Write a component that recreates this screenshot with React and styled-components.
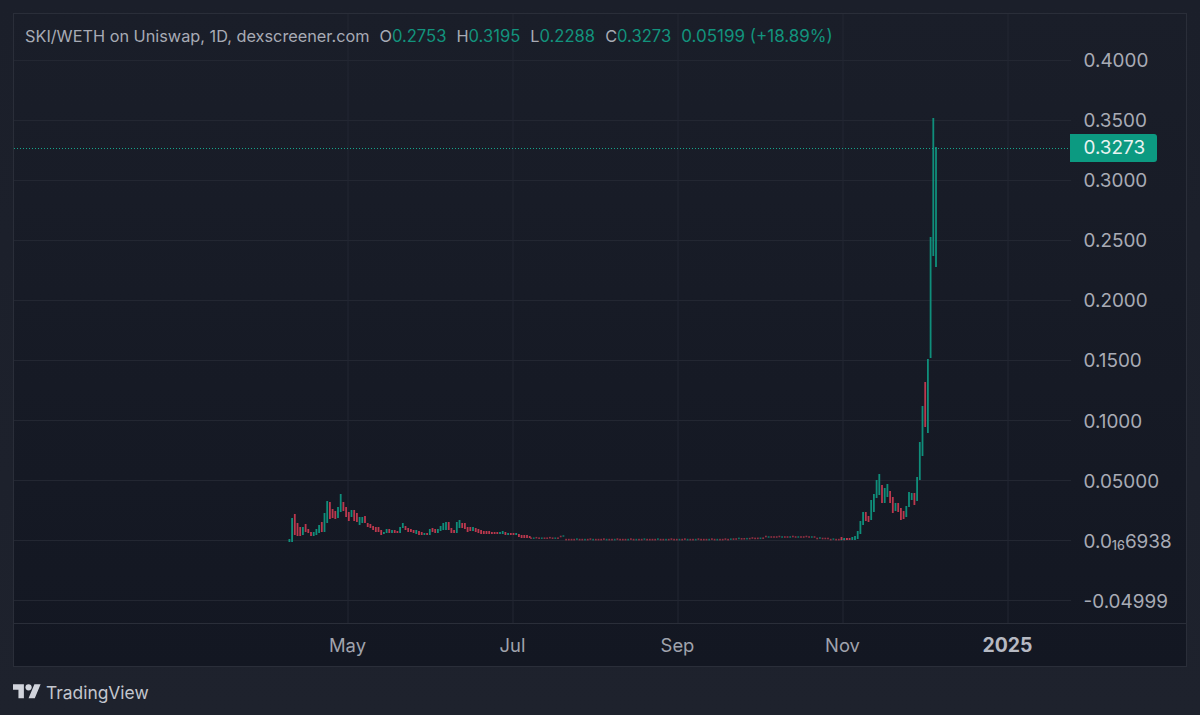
import React from "react";
import styled, { createGlobalStyle } from "styled-components";

const GlobalStyle = createGlobalStyle`
  html, body {
    margin: 0;
    padding: 0;
    background: #1d212c;
    font-family: Inter, "Liberation Sans", sans-serif;
  }
`;

const Page = styled.div`
  width: 1200px;
  height: 715px;
  box-sizing: border-box;
  padding: 13px 13px 0;
  background: linear-gradient(#1b1f2a, #1e222d);
  overflow: hidden;
`;

const Panel = styled.div`
  display: grid;
  grid-template-columns: 1057px 1fr;
  grid-template-rows: 609px 43px;
  width: 1174px;
  height: 654px;
  box-sizing: border-box;
  border: 1px solid #2a2e39;
  background: linear-gradient(#1a1e29, #131722);
`;

const Pane = styled.div`
  position: relative;
  overflow: hidden;
`;

const Chart = styled.svg`
  display: block;
  width: 1057px;
  height: 609px;
`;

const Legend = styled.div`
  position: absolute;
  top: 13px;
  left: 11px;
  display: flex;
  gap: 10px;
  font-size: 16.3px;
  line-height: 19px;
  color: #a8abb5;
  white-space: nowrap;
`;

const Value = styled.span`
  color: #12937d;
  font-size: 16.6px;
`;

const Change = styled(Value)`
  font-size: 17px;
`;

const PriceAxis = styled.div`
  position: relative;
  display: flex;
  flex-direction: column;
  padding: 17px 0 0 12.5px;
`;

const PriceLabel = styled.div`
  height: 60.1px;
  line-height: 60.1px;
  font-size: 18.9px;
  color: #a8abb5;
  white-space: nowrap;
`;

const Sub = styled.span`
  font-size: 12.5px;
  vertical-align: -2px;
  font-weight: 500;
`;

const PriceTag = styled.div`
  position: absolute;
  top: 120px;
  left: -1px;
  width: 87px;
  height: 28px;
  box-sizing: border-box;
  padding-left: 13.5px;
  border-radius: 0 3px 3px 0;
  background: #0c9a81;
  color: #e8f3f1;
  font-size: 18.9px;
  line-height: 28px;
`;

const TimeAxis = styled.div`
  grid-column: 1 / 3;
  display: flex;
  padding-left: 251px;
  border-top: 1px solid #2a2e39;
`;

const TimeLabel = styled.div`
  width: 165px;
  text-align: center;
  font-size: ${(p) => (p.$year ? "19.4px" : "18.4px")};
  line-height: 42px;
  color: ${(p) => (p.$year ? "#b6b9c2" : "#a0a3ad")};
  font-weight: ${(p) => (p.$year ? 700 : 400)};
`;

const Footer = styled.div`
  display: flex;
  align-items: center;
  gap: 5px;
  height: 50px;
  color: #c3c6ce;
  font-size: 17.4px;
`;

const Logo = styled.svg`
  width: 28px;
  height: 22px;
  fill: #d1d4dc;
`;

const GREEN = "#0f957f";
const RED = "#c43a50";

// pixel tops and bottoms per candle, read off the chart
const early = [
  [539, 542, "g"], [518, 542, "g"], [514, 535, "r"], [523, 536, "r"], [527, 536, "r"],
  [527, 535, "g"], [524, 532, "r"], [529, 533, "r"], [532, 536, "r"], [532, 536, "g"],
  [529, 535, "g"], [525, 533, "g"], [522, 532, "r"], [513, 532, "g"], [501, 523, "g"],
  [502, 519, "r"], [509, 518, "r"], [511, 519, "r"], [507, 518, "g"], [494, 512, "g"],
  [502, 511, "r"], [507, 517, "r"], [512, 521, "r"], [510, 517, "g"], [510, 521, "r"],
  [513, 522, "r"], [517, 525, "g"], [517, 523, "g"], [516, 523, "r"], [523, 527, "r"],
  [524, 528, "r"], [526, 530, "r"], [527, 532, "r"], [527, 532, "r"], [530, 535, "r"],
  [532, 534, "g"], [529, 533, "g"], [529, 533, "r"], [530, 533, "g"], [530, 533, "r"],
  [531, 533, "r"], [527, 533, "g"], [523, 528, "g"], [526, 530, "r"], [528, 532, "r"],
  [529, 532, "r"], [530, 533, "r"], [530, 534, "g"], [531, 535, "r"], [532, 535, "r"],
  [533, 535, "g"], [533, 535, "r"], [529, 535, "g"], [528, 532, "r"], [529, 533, "r"],
  [529, 533, "g"], [526, 531, "g"], [523, 530, "g"], [522, 530, "g"], [522, 530, "r"],
  [528, 533, "r"], [530, 533, "r"], [522, 533, "g"], [520, 528, "g"], [523, 528, "r"],
  [523, 529, "r"], [527, 532, "r"], [527, 531, "r"], [527, 531, "g"], [528, 532, "r"],
  [529, 533, "r"], [530, 534, "r"], [531, 534, "r"], [531, 534, "r"], [531, 534, "r"],
  [532, 534, "r"], [532, 534, "r"], [532, 534, "r"], [532, 534, "g"], [531, 534, "g"],
  [532, 535, "r"], [533, 535, "g"], [533, 535, "r"], [533, 535, "r"], [533, 535, "g"],
  [534, 537, "r"], [535, 538, "r"], [535, 538, "r"], [535, 538, "r"], [536, 538, "r"],
];

const flatCentre = (x) => {
  if (x < 560) return 538.2;
  if (x < 566) return 536.5;
  if (x < 730) return 539.6;
  if (x < 765) return 539.2 - (x - 730) * 0.03;
  if (x < 815) return 537;
  if (x < 830) return 538.5;
  return 539.6;
};

const flat = Array.from({ length: 118 }, (_, i) => {
  const x = 531 + i * 2.7;
  const c = flatCentre(x) + (i % 5 === 2 ? -0.5 : 0);
  const colour = [1, 4, 9, 12, 17].includes(i % 19) ? "g" : "r";
  return [c - 0.8, c + 0.8, colour, 0.7];
});

const late = [
  [537, 540, "r"], [538, 540, "g"], [538, 540, "r"], [538, 540, "r"], [537, 540, "g"],
  [536, 540, "g"], [531, 539, "g"], [521, 534, "g"], [512, 525, "g"], [512, 521, "r"],
  [516, 522, "r"], [500, 520, "g"], [494, 512, "g"], [480, 498, "g"], [474, 495, "g"],
  [485, 503, "r"], [488, 503, "g"], [484, 497, "g"], [491, 503, "r"], [497, 513, "r"],
  [503, 511, "g"], [503, 512, "r"], [508, 520, "r"], [511, 519, "r"], [506, 517, "g"],
  [492, 507, "g"], [493, 500, "g"], [493, 505, "r"], [477, 501, "g"], [442, 480, "g"],
  [406, 456, "g"], [382, 427, "r"], [359, 433, "g"], [237, 358, "g"], [118, 256, "g"],
  [147, 267, "g"],
];

const candles = [
  ...early.map((c, i) => [289.4 + i * 2.7, ...c]),
  ...flat.map((c, i) => [531 + i * 2.7, ...c]),
  ...late.map((c, i) => [841.5 + i * 2.7, ...c]),
];

const priceRows = [60, 120, 180, 240, 300, 360, 420, 480, 540, 600];
const timeRows = [348, 513, 678, 843, 1008];

const App = () => {
  return (
    <Page>
      <GlobalStyle />
      <Panel>
        <Pane>
          <Chart viewBox="14 14 1057 609">
            {priceRows.map((y) => (
              <line key={y} x1="14" x2="1071" y1={y + 0.5} y2={y + 0.5} stroke="#232732" />
            ))}
            {timeRows.map((x) => (
              <line key={x} x1={x} x2={x} y1="14" y2="623" stroke="#232732" />
            ))}
            {candles.map(([x, top, bottom, colour, alpha = 0.95]) => (
              <rect
                key={x}
                x={x - 0.9}
                y={top}
                width="1.8"
                height={bottom - top}
                fill={colour === "g" ? GREEN : RED}
                opacity={alpha}
              />
            ))}
            <line
              x1="14"
              x2="1070"
              y1="148.5"
              y2="148.5"
              stroke="#16a58c"
              strokeWidth="1"
              strokeDasharray="1 2"
            />
          </Chart>
          <Legend>
            <span>SKI/WETH on Uniswap, 1D, dexscreener.com</span>
            <span>O<Value>0.2753</Value></span>
            <span>H<Value>0.3195</Value></span>
            <span>L<Value>0.2288</Value></span>
            <span>C<Value>0.3273</Value></span>
            <Change>0.05199 (+18.89%)</Change>
          </Legend>
        </Pane>
        <PriceAxis>
          <PriceLabel>0.4000</PriceLabel>
          <PriceLabel>0.3500</PriceLabel>
          <PriceLabel>0.3000</PriceLabel>
          <PriceLabel>0.2500</PriceLabel>
          <PriceLabel>0.2000</PriceLabel>
          <PriceLabel>0.1500</PriceLabel>
          <PriceLabel>0.1000</PriceLabel>
          <PriceLabel>0.05000</PriceLabel>
          <PriceLabel>0.0<Sub>16</Sub>6938</PriceLabel>
          <PriceLabel>-0.04999</PriceLabel>
          <PriceTag>0.3273</PriceTag>
        </PriceAxis>
        <TimeAxis>
          <TimeLabel>May</TimeLabel>
          <TimeLabel>Jul</TimeLabel>
          <TimeLabel>Sep</TimeLabel>
          <TimeLabel>Nov</TimeLabel>
          <TimeLabel $year>2025</TimeLabel>
        </TimeAxis>
      </Panel>
      <Footer>
        <Logo viewBox="0 0 36 28">
          <path d="M14 22H7V11H0V4h14v18zM28 22h-8l7.5-18h8L28 22z" />
          <circle cx="20" cy="8" r="4" />
        </Logo>
        <span>TradingView</span>
      </Footer>
    </Page>
  );
};

export default App;
